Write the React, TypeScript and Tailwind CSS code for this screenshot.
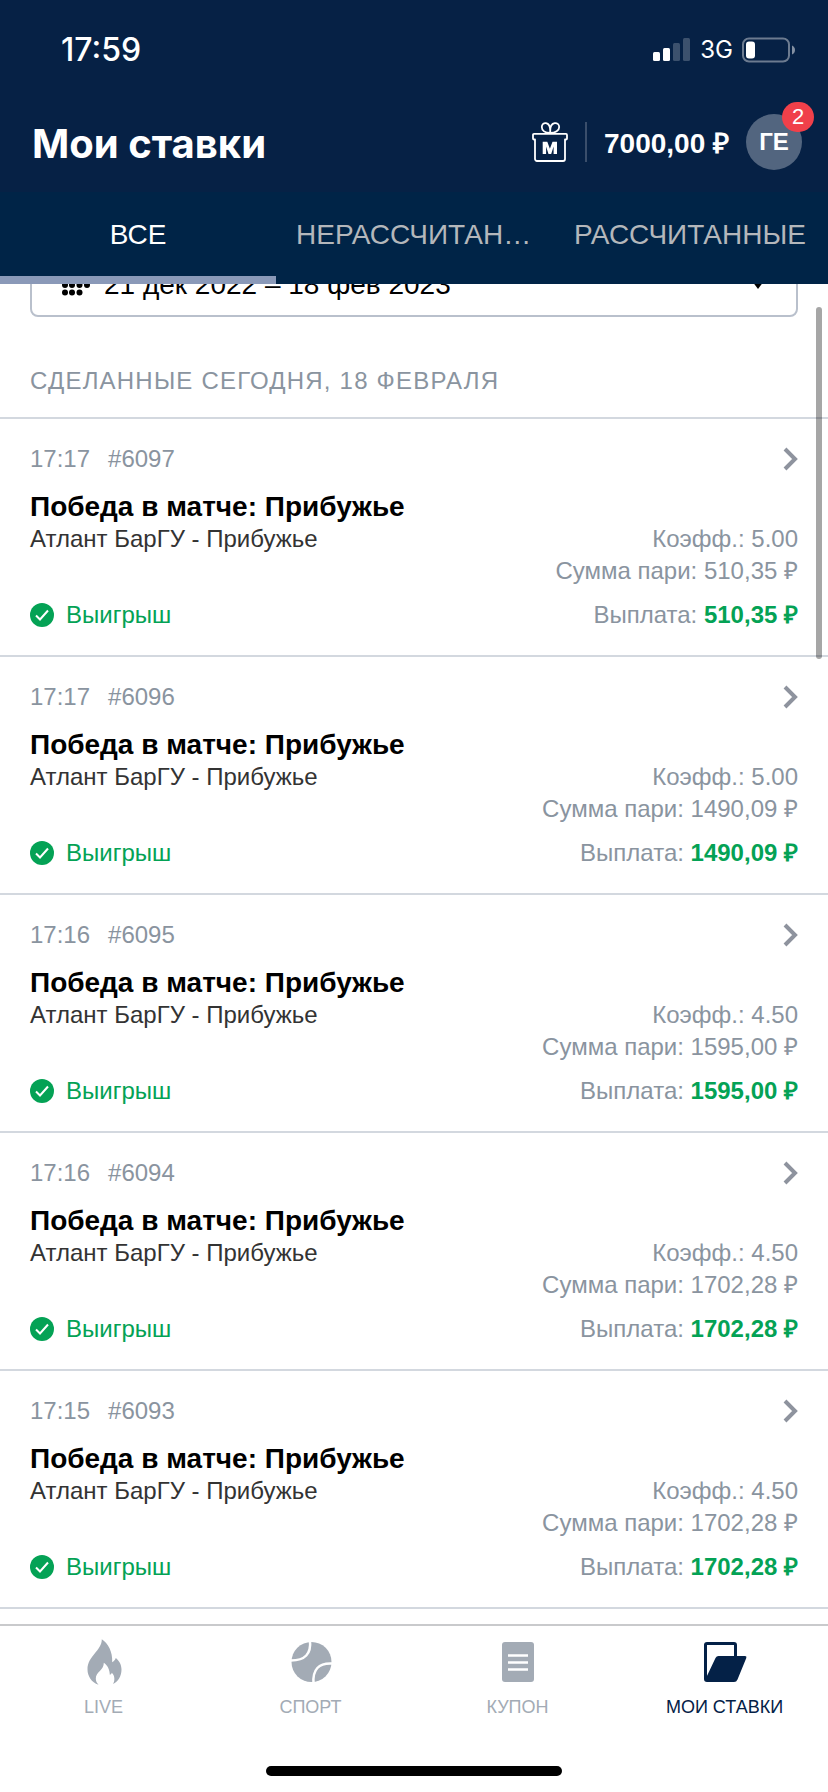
import React from "react";

type Bet = { time: string; id: string; odds: string; amount: string };

const bets: Bet[] = [
  { time: "17:17", id: "#6097", odds: "5.00", amount: "510,35 ₽" },
  { time: "17:17", id: "#6096", odds: "5.00", amount: "1490,09 ₽" },
  { time: "17:16", id: "#6095", odds: "4.50", amount: "1595,00 ₽" },
  { time: "17:16", id: "#6094", odds: "4.50", amount: "1702,28 ₽" },
  { time: "17:15", id: "#6093", odds: "4.50", amount: "1702,28 ₽" },
];

function StatusBar() {
  return (
    <div className="flex h-[100px] items-center justify-between pl-[61px] pr-8 font-['Inter',sans-serif] text-white">
      <span className="text-[32px] font-medium">17:59</span>
      <div className="flex items-center gap-[9px]">
        <svg className="h-6 w-[38px]" viewBox="0 0 38 24" fill="#fff" aria-hidden="true">
          <rect x="0" y="14" width="7" height="9" rx="1.5" />
          <rect x="10" y="10" width="7" height="13" rx="1.5" />
          <rect x="20" y="5" width="7" height="18" rx="1.5" opacity=".22" />
          <rect x="30" y="0" width="7" height="23" rx="1.5" opacity=".22" />
        </svg>
        <span className="text-2xl">3G</span>
        <svg className="h-[26px] w-[54px]" viewBox="0 0 54 26" fill="none" aria-hidden="true">
          <rect x="1" y="1.5" width="46" height="23" rx="6" stroke="#6c7b90" strokeWidth="2" />
          <rect x="4" y="4.5" width="9" height="17" rx="3" fill="#fff" />
          <path d="M50 8.5q3 1.5 3 4.500t-3 4.500z" fill="#8390a2" />
        </svg>
      </div>
    </div>
  );
}

function GiftIcon() {
  return (
    <svg className="h-[42px] w-9" viewBox="0 0 36 42" fill="none" stroke="#fff" strokeWidth="1.8" strokeLinejoin="round" aria-hidden="true">
      <path d="M2 12.900H34a1 1 0 0 1 1 1V17.500a1 1 0 0 1-1 1H33V38a2 2 0 0 1-2 2H5a2 2 0 0 1-2-2V18.500H2a1 1 0 0 1-1-1V13.900a1 1 0 0 1 1-1z" />
      <path d="M18.200 12C13 12 9.800 9.500 9.800 6c0-5.500 8.400-6 8.400 3.500zM18.200 12c5.200 0 9-2.500 9-6 0-5.500-9-6-9 3.500z" />
      <path d="M10.700 33V20.700h4.600l2.600 7 2.600-7h4.500V33h-3.400v-7.500L19.200 33h-2.700l-2.400-7.500V33z" fill="#fff" stroke="none" />
    </svg>
  );
}

function Tab({ label, active }: { label: string; active?: boolean }) {
  return (
    <button
      role="tab"
      aria-selected={!!active}
      className={
        active
          ? "min-w-0 flex-1 truncate border-b-8 border-[#8a99b8] px-5 pt-0.5 text-[28px] text-white"
          : "min-w-0 flex-1 truncate border-b-8 border-transparent px-5 pt-0.5 text-[28px] text-[#b4b7bb]"
      }
    >
      {label}
    </button>
  );
}

function BetRow({ bet }: { bet: Bet }) {
  return (
    <li className="border-b-2 border-[#d3d8df]">
      <a href={bet.id} className="block px-[30px] py-6 text-2xl text-[#8a949f]">
        <div className="flex h-8 items-center justify-between">
          <div className="flex gap-[18px]">
            <span>{bet.time}</span>
            <span>{bet.id}</span>
          </div>
          <svg className="h-6 w-4" viewBox="0 0 16 24" fill="none" stroke="#8e939e" strokeWidth="4" aria-hidden="true">
            <path d="M3 2l10 10L3 22" />
          </svg>
        </div>
        <h3 className="mt-4 text-[28px] font-bold leading-8 text-black">Победа в матче: Прибужье</h3>
        <div className="flex justify-between leading-8">
          <span className="text-[#333]">Атлант БарГУ - Прибужье</span>
          <div className="text-right">
            <p>Коэфф.: {bet.odds}</p>
            <p>Сумма пари: {bet.amount}</p>
          </div>
        </div>
        <div className="mt-3 flex items-center justify-between leading-8">
          <span className="flex items-center gap-3 text-[#04a255]">
            <svg className="size-6" viewBox="0 0 24 24" fill="none" aria-hidden="true">
              <circle cx="12" cy="12" r="12" fill="#04a255" />
              <path d="M6 12.500l4 4 8-9" stroke="#fff" strokeWidth="2" />
            </svg>
            Выигрыш
          </span>
          <span>
            Выплата: <b className="text-[#04a255]">{bet.amount}</b>
          </span>
        </div>
      </a>
    </li>
  );
}

function NavItem({ label, active, children }: { label: string; active?: boolean; children: React.ReactNode }) {
  return (
    <a
      href="#"
      className={
        active
          ? "flex flex-1 flex-col items-center gap-2 text-lg text-[#042147]"
          : "flex flex-1 flex-col items-center gap-2 text-lg text-[#a3abb5]"
      }
    >
      <svg className="h-[49px] w-11" viewBox="0 0 44 49" fill="currentColor" aria-hidden="true">
        {children}
      </svg>
      {label}
    </a>
  );
}

export default function App() {
  return (
    <div className="flex h-screen flex-col bg-white font-['Liberation_Sans',Arial,sans-serif]">
      <header className="bg-[#062145]">
        <StatusBar />
        <div className="flex h-[92px] items-center pb-2 pl-8 pr-[26px]">
          <h1 className="flex-1 pt-1 font-['Inter',sans-serif] text-[40px] font-bold text-white">Мои ставки</h1>
          <button aria-label="Бонусы">
            <GiftIcon />
          </button>
          <div className="mx-[17px] h-10 w-[2px] bg-[#3a4e6b]" />
          <span className="pt-1 text-[28px] font-bold text-white">7000,00 ₽</span>
          <button className="relative ml-[17px] size-14 rounded-full bg-[#52657f] text-2xl font-bold text-white">
            ГЕ
            <span className="absolute -right-3 -top-3 flex h-[30px] w-8 items-center justify-center rounded-full bg-[#f0404a] text-[22px] font-normal">
              2
            </span>
          </button>
        </div>
        <div role="tablist" className="flex h-[92px] bg-[#002447]">
          <Tab label="ВСЕ" active />
          <Tab label="НЕРАССЧИТАННЫЕ" />
          <Tab label="РАССЧИТАННЫЕ" />
        </div>
      </header>

      <main className="relative min-h-0 flex-1 overflow-hidden">
        <div className="-mt-8 px-[30px]">
          <button className="flex h-[65px] w-full items-center gap-3 rounded-lg border-2 border-[#b9c0cc] px-7 text-[28px] text-black">
            <svg className="h-[22px] w-8" viewBox="0 0 32 22" fill="currentColor" aria-hidden="true">
              {[12, 19.500, 27].map((x) => (
                <circle key={x} cx={x} cy="5" r="3" />
              ))}
              {[5, 12, 19.500, 27].map((x) => (
                <circle key={x} cx={x} cy="11" r="3" />
              ))}
              {[5, 12, 19.500].map((x) => (
                <circle key={x} cx={x} cy="18.500" r="3" />
              ))}
            </svg>
            <span className="flex-1 text-left">21 дек 2022 – 18 фев 2023</span>
            <svg className="mr-1 h-2 w-3" viewBox="0 0 12 8" fill="currentColor" aria-hidden="true">
              <path d="M0 0h12L6 8z" />
            </svg>
          </button>
        </div>
        <h2 className="flex h-[102px] items-end border-b-2 border-[#d3d8df] px-[30px] pb-5 text-2xl tracking-wider text-[#8a949f]">
          СДЕЛАННЫЕ СЕГОДНЯ, 18 ФЕВРАЛЯ
        </h2>
        <ul>
          {bets.map((bet) => (
            <BetRow key={bet.id} bet={bet} />
          ))}
        </ul>
        <div className="absolute right-[6px] top-[23px] h-[352px] w-[6px] rounded-full bg-black/35" />
      </main>

      <nav className="flex h-[168px] flex-col justify-between border-t-2 border-[#c9cacc] pb-4 pt-[10px]">
        <div className="flex">
          <NavItem label="LIVE">
            <path d="M19.800 3.300C26 7 30.800 16 30.200 26.300C31.800 25.500 33 24 33.800 22C37 24.500 39.500 28.500 39.500 33.500C39.500 40.500 36 45.500 31 48C33 45 33 39.500 29.800 36.700C29.500 37.800 28.800 38.500 27.800 38.700C27.800 34 25.500 29 21.800 26.700C22 34 13.800 36 13.800 42.500C13.800 45 14.800 47 16.500 48.700C9.500 46.500 5.500 40 5.500 33.500C5.500 20 20 14.500 19.800 3.300z" />
          </NavItem>
          <NavItem label="СПОРТ">
            <circle cx="22.500" cy="26" r="20" />
            <path d="M21 4.500q2 20-19 20M43 27.500q-20-1-18.500 20" fill="none" stroke="#fff" strokeWidth="2.500" />
          </NavItem>
          <NavItem label="КУПОН">
            <rect x="6" y="6" width="32" height="40" rx="3" />
            <path d="M12 19.500h20M12 26.500h20M12 33.500h20" stroke="#fff" strokeWidth="2.500" />
          </NavItem>
          <NavItem label="МОИ СТАВКИ" active>
            <path d="M2.500 43V9q0-1.500 1.500-1.500H31q1.500 0 1.500 1.500V22" fill="none" stroke="currentColor" strokeWidth="3" />
            <path d="M3 42L12.500 22q1-2 3-2H42q2 0 1.300 2L34.500 43.500Q33.500 46 31 46H4q-3 0-3-3z" />
          </NavItem>
        </div>
        <div className="h-[10px] w-[296px] self-center rounded-full bg-black" />
      </nav>
    </div>
  );
}
